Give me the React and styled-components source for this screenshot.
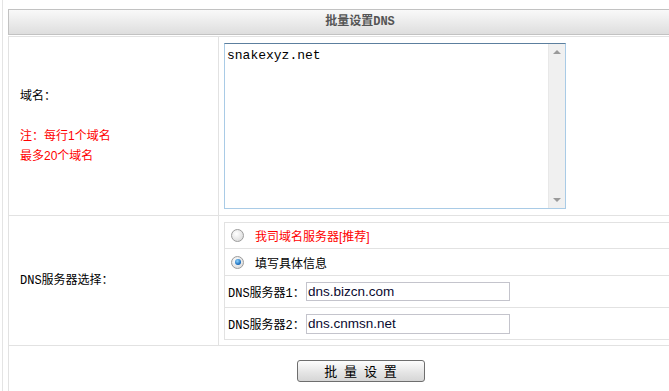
import React from "react";
import styled, { createGlobalStyle } from "styled-components";

const Global = createGlobalStyle`
  html, body { margin: 0; padding: 0; background: #fff; overflow: hidden; }
  body {
    font-family: "Liberation Sans", "Noto Sans CJK SC", sans-serif;
    font-size: 12px;
    color: #000;
  }
`;

const monoCjk = `"Liberation Mono", "Noto Sans CJK SC", monospace`;

const Page = styled.div`
  margin-left: 2px;
  border-left: 1px solid #e4e4e4;
  padding: 9px 0 0 5px;
  height: 100vh;
  box-sizing: border-box;
`;

const Panel = styled.div`
  width: 704px;
`;

const Header = styled.div`
  height: 24px;
  border: 1px solid #c2c2c2;
  background: linear-gradient(#f9f9f9, #dedede);
  text-align: center;
  line-height: 24px;
  font-weight: bold;
  font-size: 12px;
  font-family: ${monoCjk};
  color: #555;
`;

const Form = styled.div`
  margin-top: 1px;
  border-top: 1px solid #e2e2e2;
`;

const Row = styled.div`
  display: grid;
  grid-template-columns: ${(p) => (p.$full ? "1fr" : "211px 1fr")};
  border-bottom: ${(p) => (p.$full ? "none" : "1px solid #e2e2e2")};
`;

const LabelCell = styled.div`
  border-left: 1px solid #e2e2e2;
  border-right: 1px solid #e2e2e2;
  padding-left: 11px;
  display: flex;
  flex-direction: column;
  justify-content: center;
  line-height: 20px;
`;

const Note = styled.span`
  color: ${(p) => (p.$red ? "#ff0000" : "#000")};
  font-family: ${(p) => (p.$mono ? monoCjk : "inherit")};
  min-height: 20px;
  white-space: nowrap;
`;

const FieldCell = styled.div`
  padding: ${(p) => p.$pad};
`;

const AreaBox = styled.div`
  width: 340px;
  height: 164px;
  border: 1px solid #a9cbe6;
  border-top-color: #5c7f9e;
  display: flex;
`;

const Area = styled.textarea`
  flex: 1;
  border: none;
  outline: none;
  resize: none;
  overflow: hidden;
  margin: 0;
  padding: 4px 2px;
  font-family: "Liberation Mono", monospace;
  font-size: 13px;
  line-height: 15px;
  color: #000;
`;

const Scrollbar = styled.div`
  width: 16px;
  background: #f0f0f0;
  border-left: 1px solid #e8e8e8;
  display: flex;
  flex-direction: column;
  justify-content: space-between;
  align-items: center;
  padding: 6px 0 6px;
`;

const Arrow = styled.span`
  width: 0;
  height: 0;
  border-left: 4px solid transparent;
  border-right: 4px solid transparent;
  ${(p) =>
    p.$down
      ? "border-top: 4px solid #9a9a9a;"
      : "border-bottom: 4px solid #9a9a9a;"}
`;

const Inner = styled.div`
  border-top: 1px solid #e2e2e2;
  border-left: 1px solid #e2e2e2;
`;

const InnerRow = styled.div`
  height: ${(p) => p.$h}px;
  border-bottom: 1px solid #e2e2e2;
  display: flex;
  align-items: center;
  padding-left: ${(p) => p.$pl}px;
`;

const Radio = styled.span`
  width: 11px;
  height: 11px;
  border-radius: 50%;
  border: 1px solid #9c9c9c;
  background: radial-gradient(circle at 40% 35%, #ffffff, #d4d4d4);
  display: flex;
  align-items: center;
  justify-content: center;
  margin-right: 11px;
  flex: none;
  &::after {
    content: "";
    display: ${(p) => (p.$checked ? "block" : "none")};
    width: 6px;
    height: 6px;
    border-radius: 50%;
    background: radial-gradient(circle at 40% 35%, #8fd4ff, #1266b8 70%, #0a3f7a);
  }
`;

const RadioText = styled.span`
  color: ${(p) => (p.$red ? "#ff0000" : "#000")};
  font-size: 12px;
`;

const DnsLabel = styled.span`
  width: 78px;
  flex: none;
  white-space: nowrap;
  font-family: ${monoCjk};
`;

const TextInput = styled.input`
  box-sizing: border-box;
  width: 204px;
  height: ${(p) => p.$h}px;
  border: 1px solid #c4c4cc;
  padding: 0 1px;
  margin: 0;
  font-family: "Liberation Sans", sans-serif;
  font-size: 13.5px;
  color: #0a0a30;
  outline: none;
`;

const ButtonCell = styled.div`
  border-left: 1px solid #e2e2e2;
  padding-top: 14px;
  height: 60px;
  display: flex;
  justify-content: center;
  align-items: flex-start;
`;

const Button = styled.button`
  width: 128px;
  height: 22px;
  border: 1px solid #6e6e6e;
  border-radius: 3px;
  background: linear-gradient(#fdfdfd, #e4e4e4 60%, #d6d6d6);
  font-family: "Noto Sans CJK SC", sans-serif;
  font-size: 13px;
  letter-spacing: 2px;
  text-indent: 2px;
  color: #000;
  padding: 0;
  line-height: 18px;
`;

export default function App() {
  return (
    <>
      <Global />
      <Page>
        <Panel>
          <Header>批量设置DNS</Header>
          <Form>
            <Row>
              <LabelCell>
                <Note>域名：</Note>
                <Note />
                <Note $red>注：每行1个域名</Note>
                <Note $red>最多20个域名</Note>
              </LabelCell>
              <FieldCell $pad="6px 5px">
                <AreaBox>
                  <Area defaultValue="snakexyz.net" />
                  <Scrollbar>
                    <Arrow />
                    <Arrow $down />
                  </Scrollbar>
                </AreaBox>
              </FieldCell>
            </Row>
            <Row>
              <LabelCell>
                <Note $mono>DNS服务器选择：</Note>
              </LabelCell>
              <FieldCell $pad="6px 5px 5px 5px">
                <Inner>
                  <InnerRow $h={25} $pl={6}>
                    <Radio />
                    <RadioText $red>我司域名服务器[推荐]</RadioText>
                  </InnerRow>
                  <InnerRow $h={26} $pl={6}>
                    <Radio $checked />
                    <RadioText>填写具体信息</RadioText>
                  </InnerRow>
                  <InnerRow $h={31} $pl={3}>
                    <DnsLabel>DNS服务器1：</DnsLabel>
                    <TextInput $h={19} defaultValue="dns.bizcn.com" />
                  </InnerRow>
                  <InnerRow $h={31} $pl={3}>
                    <DnsLabel>DNS服务器2：</DnsLabel>
                    <TextInput $h={20} defaultValue="dns.cnmsn.net" />
                  </InnerRow>
                </Inner>
              </FieldCell>
            </Row>
            <Row $full>
              <ButtonCell>
                <Button>批 量 设 置</Button>
              </ButtonCell>
            </Row>
          </Form>
        </Panel>
      </Page>
    </>
  );
}
